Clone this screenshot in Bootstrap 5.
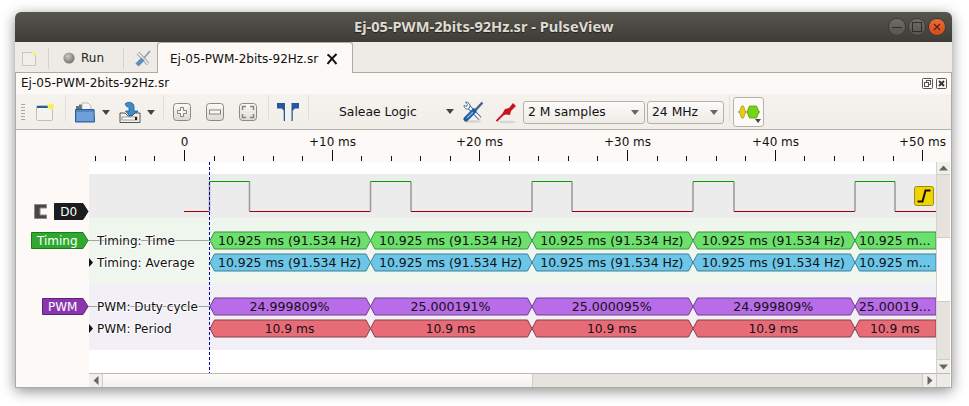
<!DOCTYPE html>
<html lang="en">
<head>
  <meta charset="UTF-8">
  <meta name="viewport" content="width=device-width, initial-scale=1.0">
  <title>Ej-05-PWM-2bits-92Hz.sr - PulseView</title>
  <link href="https://cdn.jsdelivr.net/npm/bootstrap@5.3.0/dist/css/bootstrap.min.css" rel="stylesheet">
  <style>
    body {
      background: #fff;
      width: 969px;
      height: 406px;
      overflow: hidden;
      font-family: "DejaVu Sans", sans-serif;
      font-size: 12px;
      color: #111;
    }
    .app-window {
      margin: 12px 0 0 15px;
      width: 937px;
      height: 376px;
      border-radius: 6px 6px 0 0;
      box-shadow: 0 3px 14px rgba(0, 0, 0, .45);
      background: #edebe6;
      overflow: hidden;
    }
    .title-bar {
      height: 30px;
      background: linear-gradient(#57554d, #3d3c37);
      color: #dfdbd2;
      font-family: "Noto Sans", sans-serif;
      font-weight: 700;
      font-size: 14.6px;
      text-shadow: 0 1px 1px #222;
    }
    .title-text { margin-left: 339px; width: 258px; white-space: nowrap; }
    .win-btns { margin-left: 277px; gap: 4px; }
    .win-btn {
      width: 16px;
      height: 16px;
      border-radius: 50%;
      background: linear-gradient(#6f6d67, #55534e);
      box-shadow: 0 0 0 1px #3a3934;
    }
    .win-btn.is-close { background: linear-gradient(#ee6a35, #d9491a); }

    .tab-strip { height: 31px; padding-top: 2px; background: #eeebe7; border-bottom: 1px solid #aeaba6; }
    .tab-strip .vr { height: 21px; background: #8e8b86; }
    .tab-strip .nav-tabs { margin-top: -2px; }
    .tab-new { margin-left: 7px; }
    .tab-sep1 { margin-left: 11px; }
    .tab-run { margin-left: 14px; }
    .tab-run-label { margin-left: 6px; width: 22px; color: #222; }
    .tab-sep2 { margin-left: 20px; }
    .tab-tools { margin-left: 11px; }
    .page-tab {
      margin-left: 6px;
      width: 196px;
      height: 31px;
      padding: 2px 0 0 12px;
      background: #fcf9f6;
      border: 1px solid #aeaba6;
      border-bottom: 0;
      border-radius: 3px 3px 0 0;
      white-space: nowrap;
      color: #111;
    }
    .page-tab svg { margin-left: 8px; }

    .doc-bar { height: 21px; background: #fdf9f6; padding: 0 4px 0 5px; border-left: 1px solid #aeaba6; border-right: 1px solid #aeaba6; }
    .doc-name { line-height: 21px; }
    .doc-btns { gap: 3px; margin-left: auto; }

    .tool-bar {
      height: 36px;
      padding-top: 1px;
      background: linear-gradient(#f6f3ee, #f1eeea);
      border-bottom: 1px solid #b5b2ac;
      border-left: 1px solid #aeaba6;
      border-right: 1px solid #aeaba6;
      white-space: nowrap;
      font-size: 12.35px;
    }
    .tool-bar > * { flex: none; }
    .tool-bar .vr { height: 26px; background: #a9a6a0; }
    .grip { width: 4px; height: 18px; margin-left: 5px; background: radial-gradient(circle, #aaa7a1 .7px, transparent 1px) 0 0 / 2px 3px; }
    .t-new { margin-left: 11px; }
    .t-sep { margin-left: 11px; }
    .t-open { margin-left: 9px; }
    .caret-down { width: 0; height: 0; border: 4.5px solid transparent; border-top: 5px solid #444; border-bottom: 0; }
    .t-caret1 { margin-left: 7px; }
    .t-save { margin-left: 9px; }
    .t-caret2 { margin-left: 6px; }
    .t-sep2 { margin-left: 8px; }
    .t-plus { margin-left: 9px; }
    .t-minus, .t-fit { margin-left: 15px; }
    .t-sep3 { margin-left: 11px; }
    .t-flags { margin-left: 8px; }
    .t-sep4 { margin-left: 9px; }
    .t-device { margin-left: 30px; width: 115px; }
    .t-device .caret-down { margin-left: auto; }
    .t-config { margin-left: 9px; }
    .t-probe { margin-left: 13px; }
    .combo {
      height: 23px;
      padding: 0 5px 0 4px;
      border: 1px solid #b5b2ac;
      border-radius: 3px;
      background: linear-gradient(#fbfaf8, #eeebe7);
      color: #111;
    }
    .combo .caret-down { margin-left: auto; border-top-color: #666; }
    .t-samples { margin-left: 6px; width: 122px; }
    .t-rate { margin-left: 2px; width: 77px; }
    .t-sep5 { margin-left: 5px; }
    .t-decoder {
      position: relative;
      margin-left: 3px;
      width: 31px;
      height: 30px;
      border: 1px solid #b5b2ac;
      border-radius: 3px;
      background: #fbfaf7;
      padding: 0;
    }
    .t-decoder .caret-down { position: absolute; right: 2px; bottom: 3px; border-width: 3.5px; border-top-width: 4px; }

    .view-pane { height: 258px; border-left: 1px solid #aeaba6; border-right: 1px solid #aeaba6; border-bottom: 1px solid #aeaba6; background: #fcf9f6; }
    .trace-col { width: 920px; }
    .trace-col svg { display: block; overflow: visible; }
    .trace-label { font-family: "DejaVu Sans", sans-serif; font-size: 12px; }
    .row-name { paint-order: stroke; stroke: #fff; stroke-width: 2px; stroke-opacity: .75; }
    .v-scroll { width: 14px; background: #e6e3de; height: 211px; margin-top: 32px; border-left: 1px solid #d5d2cd; }
    .h-scroll { height: 14px; margin-left: 73px; width: 847px; background: #e6e3de; border-top: 1px solid #bcb9b3; }
    .sb-arrow { flex: none; background: #f1efeb; }
    .v-scroll .sb-arrow { height: 13px; border-bottom: 1px solid #cfccc7; }
    .v-scroll .sb-arrow.is-end { height: 14px; border-top: 1px solid #cfccc7; border-bottom: 0; }
    .h-scroll .sb-arrow { width: 14px; border-right: 1px solid #cfccc7; }
    .h-scroll .sb-arrow.is-end { margin-left: auto; width: 14px; border-left: 1px solid #cfccc7; border-right: 0; }
    .v-thumb { height: 65px; margin-top: 62px; background: #fdfcfa; border-top: 1px solid #cfccc7; border-bottom: 1px solid #cfccc7; }
    .h-thumb { width: 430px; background: linear-gradient(#fdfcfa, #f3f1ed); border-right: 1px solid #cfccc7; }
    .corner { width: 14px; height: 14px; background: #edebe6; border-left: 1px solid #cfccc7; border-top: 1px solid #bcb9b3; }
  </style>
</head>
<body>

<div class="app-window d-flex flex-column">
  <div class="title-bar d-flex align-items-center flex-none">
    <div class="title-text">Ej-05-PWM-2bits-92Hz.sr - PulseView</div>
    <div class="win-btns d-flex">
      <div class="win-btn d-flex align-items-center justify-content-center">
        <svg width="10" height="10"><path d="M0 5.500h10" stroke="#2f2e2a" stroke-width="1.200"/></svg>
      </div>
      <div class="win-btn d-flex align-items-center justify-content-center">
        <svg width="10" height="10"><rect x=".5" y=".5" width="9" height="9" fill="none" stroke="#2f2e2a"/></svg>
      </div>
      <div class="win-btn is-close d-flex align-items-center justify-content-center">
        <svg width="8" height="8"><path d="M1 1l6 6M7 1l-6 6" stroke="#4a2a14" stroke-width="1.200"/></svg>
      </div>
    </div>
  </div>

  <div class="tab-strip d-flex align-items-center">
    <svg class="tab-new" width="15" height="15"><rect x=".5" y="1.500" width="13" height="13" fill="#f1efe9" stroke="#c9c6bf"/><circle cx="12" cy="2.500" r="2.200" fill="#f4ee9c"/></svg>
    <div class="vr tab-sep1 align-self-center"></div>
    <svg class="tab-run" width="12" height="12"><defs><radialGradient id="runBall" cx=".4" cy=".35" r=".7"><stop offset="0" stop-color="#c9c8c2"/><stop offset="1" stop-color="#6f6e69"/></radialGradient></defs><circle cx="6" cy="6" r="5.600" fill="url(#runBall)"/></svg>
    <span class="tab-run-label">Run</span>
    <div class="vr tab-sep2 align-self-center"></div>
    <svg class="tab-tools" width="16" height="17" opacity=".75"><path d="M3 3l10 11" stroke="#7f8a99" stroke-width="3.400"/><path d="M3 3l10 11" stroke="#f4f4f2" stroke-width="1.800"/><path d="M15 1l-6 7" stroke="#6f7f93" stroke-width="1.600"/><path d="M8 9l-6 6" stroke="#2f70b8" stroke-width="4.400"/></svg>
    <ul class="nav nav-tabs border-0">
      <li class="nav-item">
        <div class="page-tab d-flex align-items-center">Ej-05-PWM-2bits-92Hz.sr
          <svg width="12" height="12"><path d="M1.500 1.500c3 2 6 6 9 9.500M10.500 1c-3 3-6 6-9 10" stroke="#111" stroke-width="2" fill="none"/></svg>
        </div>
      </li>
    </ul>
  </div>

  <div class="doc-bar d-flex align-items-center">
    <span class="doc-name">Ej-05-PWM-2bits-92Hz.sr</span>
    <div class="doc-btns d-flex">
      <svg width="11" height="11"><rect x=".5" y=".5" width="10" height="10" rx="1" fill="none" stroke="#555"/><rect x="4.500" y="2.500" width="4" height="4" fill="none" stroke="#555"/><rect x="2.500" y="4.500" width="4" height="4" fill="#fdf9f6" stroke="#555"/></svg>
      <svg width="11" height="11"><rect x=".5" y=".5" width="10" height="10" rx="1" fill="none" stroke="#555"/><path d="M3 3l5 5M8 3l-5 5" stroke="#333" stroke-width="1.800"/></svg>
    </div>
  </div>

  <div class="tool-bar d-flex align-items-center">
    <div class="grip"></div>
    <svg class="t-new" width="18" height="18"><rect x=".5" y="2.500" width="16" height="15" rx="1" fill="#f3f2ee" stroke="#c2bfb8"/><rect x="1" y="3" width="13" height="2" fill="#2c5b9b"/><circle cx="15" cy="3.500" r="3" fill="#f6ee4a" stroke="#f7f3a0"/></svg>
    <div class="vr t-sep"></div>
    <svg class="t-open" width="20" height="21"><path d="M1 4h3V2.500h7l4 4v6H1z" fill="#6f7072"/><path d="M7 1h6l3 3v7H7z" fill="#f6f6f4" stroke="#a5a5a3" stroke-width=".7"/><path d="M.5 7.500h18.500l.5 12.500H.5z" fill="#4f86c6" stroke="#2e5a94"/><path d="M1.500 10h17v9h-17z" fill="#6f9fd8"/></svg>
    <div class="caret-down t-caret1"></div>
    <svg class="t-save" width="22" height="22"><path d="M6 3c3-3 9-2 9 3v4h4l-6.500 7-6-7h3.500V7.500c0-1.500-1-2-2-1.500z" fill="#3b8ccb" stroke="#245d95" stroke-width=".8"/><path d="M1 12h5l3 3h4l3-3h5v9.500H1z" fill="#f3f2ee" stroke="#55534e"/><rect x="3" y="16" width="15" height="3" fill="#fff" stroke="#77756f" stroke-width=".7"/><rect x="16" y="16" width="2" height="3" fill="#222"/></svg>
    <div class="caret-down t-caret2"></div>
    <div class="vr t-sep2"></div>
    <svg class="t-plus" width="18" height="18"><defs><linearGradient id="zoomBtn" x1="0" y1="0" x2="0" y2="1"><stop offset="0" stop-color="#fbfaf8"/><stop offset="1" stop-color="#dcd9d3"/></linearGradient></defs><rect x=".5" y=".5" width="17" height="17" rx="3" fill="url(#zoomBtn)" stroke="#8b8983"/><path d="M7.500 4.500h3v3h3v3h-3v3h-3v-3h-3v-3h3z" fill="#f7f6f3" stroke="#85837d"/></svg>
    <svg class="t-minus" width="18" height="18"><rect x=".5" y=".5" width="17" height="17" rx="3" fill="url(#zoomBtn)" stroke="#8b8983"/><rect x="3.500" y="7" width="11" height="4" fill="#f7f6f3" stroke="#85837d"/></svg>
    <svg class="t-fit" width="18" height="18"><rect x=".5" y=".5" width="17" height="17" rx="3" fill="url(#zoomBtn)" stroke="#8b8983"/><path d="M3.500 7V3.500H7M11 3.500h3.500V7M14.500 11v3.500H11M7 14.500H3.500V11" fill="none" stroke="#85837d" stroke-width="1.500"/></svg>
    <div class="vr t-sep3"></div>
    <svg class="t-flags" width="22" height="18"><path d="M0 0h8v18H6.700V7.500L4.500 5.500H0zM22 0H14.500v18h1.300V7.500L18 5.500h4z" fill="#26589f"/></svg>
    <div class="vr t-sep4"></div>
    <div class="t-device d-flex align-items-center">Saleae Logic<span class="caret-down"></span></div>
    <svg class="t-config" width="20" height="23"><ellipse cx="10" cy="20.500" rx="9" ry="1.500" fill="#d8d6d1"/><path d="M4 4l13 13.500" stroke="#4c6b96" stroke-width="4"/><path d="M4 4l13 13.500" stroke="#fff" stroke-width="2.200"/><path d="M1 4.500c0 3 3 4.500 5 3l1-2.500c0-2-1.500-4-4.500-4l2 2.500-1 2z" fill="#fff" stroke="#4c6b96"/><path d="M19.500 1.500l-7 7.500" stroke="#47628a" stroke-width="2.400"/><path d="M11 10l-8 8" stroke="#1f5da3" stroke-width="5" stroke-linecap="round"/><path d="M10 11l-6 6" stroke="#7fb0e0" stroke-width="1.500"/></svg>
    <svg class="t-probe" width="21" height="23"><ellipse cx="11" cy="21" rx="9" ry="1.300" fill="#d8d6d1"/><path d="M.5 20L7 13.500" stroke="#c4161c" stroke-width="1.800"/><path d="M5 15l4-7 4-1 4-5 3 3-5 5-1 4-4-.5z" fill="#c4161c"/></svg>
    <div class="combo t-samples d-flex align-items-center">2 M samples<span class="caret-down"></span></div>
    <div class="combo t-rate d-flex align-items-center">24 MHz<span class="caret-down"></span></div>
    <div class="vr t-sep5"></div>
    <button type="button" class="btn t-decoder d-flex align-items-center justify-content-center">
      <svg width="22" height="14"><path d="M0 7h22" stroke="#6a8a2a"/><path d="M1.500 7l2-6h2l2 6-2 6h-2z" fill="#efc91a" stroke="#b59a12" stroke-width=".8"/><path d="M9 7l2.500-6h7L21 7l-2.500 6h-7z" fill="#76d414" stroke="#549c10" stroke-width=".8"/></svg>
      <span class="caret-down"></span>
    </button>
  </div>

  <div class="view-pane d-flex flex-wrap align-content-start">
    <div class="trace-col"><svg id="traces" width="920" height="243"></svg></div>
    <div class="v-scroll d-flex flex-column">
      <div class="sb-arrow d-flex align-items-center justify-content-center"><svg width="9" height="6"><path d="M0 5.500L4.500 .5 9 5.500z" fill="#666"/></svg></div>
      <div class="v-thumb flex-none"></div>
      <div class="sb-arrow is-end d-flex align-items-center justify-content-center mt-auto"><svg width="9" height="6"><path d="M0 .5L4.500 5.500 9 .5z" fill="#666"/></svg></div>
    </div>
    <div class="h-scroll d-flex">
      <div class="sb-arrow d-flex align-items-center justify-content-center"><svg width="6" height="9"><path d="M5.500 0L.5 4.500 5.500 9z" fill="#666"/></svg></div>
      <div class="h-thumb"></div>
      <div class="sb-arrow is-end d-flex align-items-center justify-content-center"><svg width="6" height="9"><path d="M.5 0L5.500 4.500 .5 9z" fill="#666"/></svg></div>
    </div>
    <div class="corner"></div>
  </div>
</div>

<script>
  // svg origin sits at page x=16, y=130
  const ox = 16, oy = 130;
  const px = x => x - ox;
  const py = y => y - oy;
  let out = '';

  // row backgrounds
  const bands = [
    [162, 12, '#ffffff'], [174, 44, '#ececec'], [218, 66, '#eff6ee'],
    [284, 66, '#f3eff7'], [350, 23, '#ffffff']
  ];
  bands.forEach(b => {
    out += `<rect x="${px(89)}" y="${py(b[0])}" width="847" height="${b[1]}" fill="${b[2]}"/>`;
  });

  // ruler
  const tickStep = 29.533;
  for (let k = -3; k <= 25; k++) {
    const x = Math.round(184 + k * tickStep) + 0.5;
    const major = k >= 0 && k % 5 === 0;
    if (x > 936) break;
    out += `<path d="M${px(x)} ${py(major ? 150 : 156)}V${py(161)}" stroke="#111"/>`;
    if (major) {
      const label = k === 0 ? '0' : `+${k * 2} ms`;
      out += `<text class="trace-label" x="${px(x)}" y="${py(146)}" text-anchor="middle" fill="#111">${label}</text>`;
    }
  }

  // D0 waveform
  const edges = [[209.5, 249.5], [370.5, 411], [532, 572], [693, 734], [855, 895]];
  let prev = 184;
  edges.forEach(e => {
    out += `<path d="M${px(prev)} ${py(211.5)}H${px(e[0])}" stroke="#a00000"/>`;
    out += `<path d="M${px(e[0])} ${py(181.5)}V${py(211.5)}M${px(e[1])} ${py(181.5)}V${py(211.5)}" stroke="#999" stroke-width="1.500"/>`;
    out += `<path d="M${px(e[0])} ${py(181.5)}H${px(e[1])}" stroke="#00a000"/>`;
    prev = e[1];
  });
  out += `<path d="M${px(prev)} ${py(211.5)}H${px(936)}" stroke="#a00000"/>`;

  // decoder rows, the last segment runs off the view and ends flat at 936
  const marks = [210, 370.5, 532, 693, 855, 936];
  const rows = [
    { name: 'Timing: Time', y: 240.5, fill: '#6ce06c', line: '#3f8f3f', line2: true, size: 12.45,
      vals: ['10.925 ms (91.534 Hz)', '10.925 ms (91.534 Hz)', '10.925 ms (91.534 Hz)', '10.925 ms (91.534 Hz)', '10.925 m...'] },
    { name: 'Timing: Average', y: 262.5, fill: '#6cc6e8', line: '#3f7f97', size: 12.45,
      vals: ['10.925 ms (91.534 Hz)', '10.925 ms (91.534 Hz)', '10.925 ms (91.534 Hz)', '10.925 ms (91.534 Hz)', '10.925 m...'] },
    { name: 'PWM: Duty cycle', y: 306.5, fill: '#b96ce8', line: '#6d3f87', line2: true, size: 12.6,
      vals: ['24.999809%', '25.000191%', '25.000095%', '24.999809%', '25.00019...'] },
    { name: 'PWM: Period', y: 328.5, fill: '#e86c78', line: '#873f46', size: 12.3,
      vals: ['10.9 ms', '10.9 ms', '10.9 ms', '10.9 ms', '10.9 ms'] }
  ];
  rows.forEach(r => {
    if (r.line2) out += `<path d="M${px(88)} ${py(r.y)}H${px(210)}" stroke="#a3a3a3"/>`;
    else out += `<path d="M${px(89)} ${py(r.y - 4.5)}l4 4.500-4 4.500z" fill="#111"/>`;
    out += `<text class="trace-label row-name" x="${px(97)}" y="${py(r.y + 4.5)}" fill="#111">${r.name}</text>`;
    r.vals.forEach((v, i) => {
      const a = px(marks[i]), b = px(marks[i + 1]), y = py(r.y);
      const last = i === 4;
      const pts = last
        ? [[a, y], [a + 4.5, y - 8.5], [b, y - 8.5], [b, y + 8.5], [a + 4.5, y + 8.5]]
        : [[a, y], [a + 4.5, y - 8.5], [b - 4.5, y - 8.5], [b, y], [b - 4.5, y + 8.5], [a + 4.5, y + 8.5]];
      out += `<polygon points="${pts.map(p => p.join(',')).join(' ')}" fill="${r.fill}" stroke="${r.line}"/>`;
      out += `<text class="trace-label" x="${(a + b) / 2 - 0.7}" y="${y + 4.5}" text-anchor="middle" fill="#111" style="font-size:${r.size}px">${v}</text>`;
    });
  });

  // cursor
  out += `<path d="M${px(209.5)} ${py(162)}V${py(373)}" stroke="#0000c0" stroke-dasharray="3 2"/>`;

  // channel and decoder flags
  out += `<path d="M${px(34.5)} ${py(204.5)}h12v3.500h-6.500v7h6.500v3.500h-12z" fill="#474747" stroke="#8a8a8a" stroke-width="1" stroke-linejoin="round"/>`;
  const flag = (x0, y0, h, fill, line, text) => {
    const x1 = 88, tip = 5;
    const m = y0 + h / 2;
    out += `<polygon points="${px(x0)},${py(y0)} ${px(x1 - tip)},${py(y0)} ${px(x1)},${py(m)} ${px(x1 - tip)},${py(y0 + h)} ${px(x0)},${py(y0 + h)}" fill="${fill}" stroke="${line}"/>`;
    out += `<text class="trace-label" x="${px((x0 + x1 - tip) / 2)}" y="${py(m + 4.5)}" text-anchor="middle" fill="#fff">${text}</text>`;
  };
  flag(54.5, 203.5, 16, '#1b1d1e', '#1b1d1e', 'D0');
  flag(31.5, 232.5, 16, '#2fa82f', '#1c7a1c', 'Timing');
  flag(42.5, 298.5, 16, '#8a36ae', '#5e2378', 'PWM');

  // trigger marker
  out += `<rect x="${px(914.5)}" y="${py(186.5)}" width="19" height="19" rx="2" fill="#f0d400" stroke="#a08c10"/>`;
  out += `<path d="M${px(917.5)} ${py(201.5)}h5l3-11h5" fill="none" stroke="#111" stroke-width="2"/>`;

  document.getElementById('traces').innerHTML = out;
</script>

<script src="https://cdn.jsdelivr.net/npm/bootstrap@5.3.0/dist/js/bootstrap.bundle.min.js"></script>

</body>
</html>
